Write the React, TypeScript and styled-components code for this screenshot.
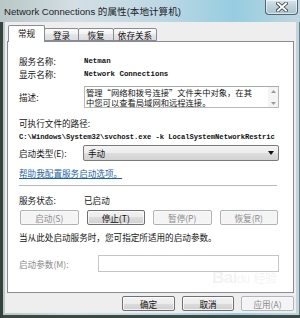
import React from "react";
import styled, { createGlobalStyle } from "styled-components";

const CJK = `"Noto Sans CJK SC", "Noto Sans", sans-serif`;
const MONO = `"Liberation Mono", "Noto Sans CJK SC", monospace`;

const GlobalStyle = createGlobalStyle`
  html, body { margin: 0; padding: 0; background: #ffffff; }
  body { width: 300px; height: 318px; overflow: hidden; }
  * { box-sizing: border-box; }
`;

const Window = styled.div`
  position: relative;
  width: 300px;
  height: 318px;
  display: flex;
  flex-direction: column;
  background: linear-gradient(90deg, #b9c7c6 0%, #d3dfe4 25%, #bcd7e4 55%, #96cde0 78%, #bfd6e0 100%);
  overflow: hidden;
`;

const TitleBar = styled.div`
  height: 22px;
  display: flex;
  align-items: flex-start;
  padding-left: 4px;
`;

const Title = styled.div`
  font-family: "Liberation Sans", ${CJK};
  font-size: 9.6px;
  line-height: 24px;
  color: #1c2428;
  white-space: nowrap;
`;

const CloseButton = styled.div`
  margin-left: auto;
  margin-right: 2px;
  width: 33px;
  height: 15px;
  border: 1px solid rgba(45, 62, 72, 0.75);
  border-top: none;
  border-radius: 0 0 4px 4px;
  background: linear-gradient(#d7e4ea, #b9cfda 55%, #a9c3cf);
  box-shadow: inset 0 0 0 1px rgba(255, 255, 255, 0.55);
  display: flex;
  align-items: center;
  justify-content: center;
`;

const Frame = styled.div`
  flex: 1;
  display: flex;
  padding: 0 4px 5px 5px;
  box-shadow: inset 3px 0 0 #33433b, inset 0 -3px 0 #3c4943, inset -1px 0 0 #6d7c80;
`;

const Client = styled.div`
  flex: 1;
  display: flex;
  flex-direction: column;
  background: #efeeee;
  padding: 3px 2px 2px 2px;
`;

const Tabs = styled.div`
  display: flex;
  align-items: flex-end;
  height: 16px;
  padding-left: 1px;
  position: relative;
  z-index: 1;
`;

const Tab = styled.div<{ $w: number; $active?: boolean }>`
  width: ${(p) => p.$w}px;
  height: ${(p) => (p.$active ? 17 : 13)}px;
  margin-bottom: ${(p) => (p.$active ? -1 : 0)}px;
  margin-left: -1px;
  border: 1px solid #898c95;
  border-bottom: ${(p) => (p.$active ? "none" : "1px solid #898c95")};
  border-radius: 2px 2px 0 0;
  background: ${(p) =>
    p.$active ? "#ffffff" : "linear-gradient(#fbfbfb, #f1f1f1 50%, #e6e6e6 50%, #dcdcdc)"};
  font-family: ${CJK};
  font-size: 8.6px;
  color: #111;
  display: flex;
  align-items: center;
  justify-content: center;
  padding-bottom: ${(p) => (p.$active ? 2 : 0)}px;
  &:first-child { margin-left: 0; }
`;

const Panel = styled.div`
  flex: 1;
  background: #ffffff;
  border: 1px solid #898c95;
  display: flex;
  flex-direction: column;
  padding: 0 13px 0 11px;
`;

const Row = styled.div<{ $top: number; $h: number }>`
  display: flex;
  align-items: center;
  margin-top: ${(p) => p.$top}px;
  height: ${(p) => p.$h}px;
  flex: none;
`;

const Label = styled.div<{ $w?: number; $disabled?: boolean }>`
  width: ${(p) => (p.$w ? `${p.$w}px` : "auto")};
  flex: none;
  font-family: ${CJK};
  font-size: 8.6px;
  line-height: 12px;
  color: ${(p) => (p.$disabled ? "#8a8a8a" : "#151515")};
  white-space: nowrap;
`;

const Value = styled.div`
  font-family: ${MONO};
  font-size: 7.4px;
  line-height: 12px;
  color: #111;
  white-space: nowrap;
  font-weight: 600;
`;

const PathText = styled(Value)`
  font-size: 7.2px;
  letter-spacing: -0.05px;
`;

const TextBox = styled.div`
  width: 195px;
  height: 22px;
  border: 1px solid #b7b9bf;
  border-top-color: #a6a9b0;
  display: flex;
  background: #fff;
`;

const TextBoxContent = styled.div`
  flex: 1;
  font-family: ${CJK};
  font-size: 8.3px;
  line-height: 10px;
  color: #151515;
  padding: 0 0 0 1px;
  white-space: nowrap;
`;

const ScrollBar = styled.div`
  width: 10px;
  display: flex;
  flex-direction: column;
  justify-content: space-between;
  align-items: center;
  padding: 3px 0 2px;
  background: #f4f4f4;
`;

const Select = styled.div`
  width: 196px;
  height: 16px;
  margin-left: -1px;
  border: 1px solid #7a7a7a;
  border-radius: 2px;
  background: linear-gradient(#f4f4f4, #ececec 50%, #dedede 50%, #d2d2d2);
  display: flex;
  align-items: center;
  padding: 0 4px 0 4px;
  font-family: ${CJK};
  font-size: 8.6px;
  color: #111;
`;

const SelectArrow = styled.div`
  margin-left: auto;
  display: flex;
  align-items: center;
`;

const Link = styled.div`
  font-family: ${CJK};
  font-size: 8.6px;
  line-height: 12px;
  color: #1b5fa8;
  text-decoration: underline;
  white-space: nowrap;
`;

const Separator = styled.div`
  margin-top: 6px;
  width: 258px;
  height: 1px;
  background: #b9b9b9;
  flex: none;
`;

const ButtonGrid = styled.div`
  display: grid;
  grid-template-columns: repeat(4, 1fr);
  column-gap: 8px;
  width: 258px;
  margin: 4px 0 0 1px;
  height: 15px;
  flex: none;
`;

const Button = styled.div<{ $disabled?: boolean; $w?: number }>`
  width: ${(p) => (p.$w ? `${p.$w}px` : "auto")};
  height: 15px;
  border: 1px solid ${(p) => (p.$disabled ? "#b0b4b7" : "#707070")};
  border-radius: 2px;
  background: ${(p) =>
    p.$disabled
      ? "#f4f4f4"
      : "linear-gradient(#f3f3f3, #ebebeb 50%, #dddddd 50%, #cfcfcf)"};
  box-shadow: inset 0 0 0 1px ${(p) => (p.$disabled ? "#f8f8f8" : "rgba(255,255,255,0.7)")};
  font-family: ${CJK};
  font-size: 8.6px;
  color: ${(p) => (p.$disabled ? "#8c8c8c" : "#111")};
  display: flex;
  align-items: center;
  justify-content: center;
  white-space: nowrap;
`;

const Input = styled.div`
  width: 181px;
  height: 17px;
  border: 1px solid #c3c5c9;
  background: #ffffff;
`;

const BottomBar = styled.div`
  display: flex;
  justify-content: flex-end;
  gap: 7px;
  padding: 3px 0 0 0;
  flex: none;
`;

const Watermark = styled.div`
  position: absolute;
  left: 212px;
  top: 268px;
  font-family: "Liberation Sans", ${CJK};
  font-size: 17px;
  font-weight: bold;
  color: rgba(200, 200, 200, 0.22);
  white-space: nowrap;
  pointer-events: none;
  letter-spacing: -0.5px;
`;

const WatermarkSmall = styled.span`
  font-size: 12px;
  font-weight: normal;
`;

export default function App() {
  return (
    <>
      <GlobalStyle />
      <Window>
        <TitleBar>
          <Title>Network Connections 的属性(本地计算机)</Title>
          <CloseButton>
            <svg width="12" height="10" viewBox="0 0 12 10">
              <path d="M2 1.5 L10 8.5 M10 1.5 L2 8.5" stroke="#2f3d44" strokeWidth="3.6" strokeLinecap="square" />
              <path d="M2 1.5 L10 8.5 M10 1.5 L2 8.5" stroke="#ffffff" strokeWidth="2" strokeLinecap="square" />
            </svg>
          </CloseButton>
        </TitleBar>
        <Frame>
          <Client>
            <Tabs>
              <Tab $w={37} $active>常规</Tab>
              <Tab $w={35}>登录</Tab>
              <Tab $w={36}>恢复</Tab>
              <Tab $w={44}>依存关系</Tab>
            </Tabs>
            <Panel>
              <Row $top={12} $h={13}>
                <Label $w={65}>服务名称:</Label>
                <Value>Netman</Value>
              </Row>
              <Row $top={0} $h={13}>
                <Label $w={65}>显示名称:</Label>
                <Value>Network Connections</Value>
              </Row>
              <Row $top={6} $h={22}>
                <Label $w={65}>描述:</Label>
                <TextBox>
                  <TextBoxContent>
                    管理“网络和拨号连接”文件夹中对象，在其
                    <br />
                    中您可以查看局域网和远程连接。
                  </TextBoxContent>
                  <ScrollBar>
                    <svg width="5" height="3" viewBox="0 0 5 3">
                      <path d="M0 3 L2.5 0 L5 3 Z" fill="#9a9a9a" />
                    </svg>
                    <svg width="5" height="3" viewBox="0 0 5 3">
                      <path d="M0 0 L2.5 3 L5 0 Z" fill="#9a9a9a" />
                    </svg>
                  </ScrollBar>
                </TextBox>
              </Row>
              <Row $top={8} $h={13}>
                <Label>可执行文件的路径:</Label>
              </Row>
              <Row $top={1} $h={13}>
                <PathText>C:\Windows\System32\svchost.exe -k LocalSystemNetworkRestric</PathText>
              </Row>
              <Row $top={2} $h={16}>
                <Label $w={65}>启动类型(E):</Label>
                <Select>
                  手动
                  <SelectArrow>
                    <svg width="6" height="4" viewBox="0 0 6 4">
                      <path d="M0 0 L6 0 L3 4 Z" fill="#111" />
                    </svg>
                  </SelectArrow>
                </Select>
              </Row>
              <Row $top={5} $h={13}>
                <Link>帮助我配置服务启动选项。</Link>
              </Row>
              <Separator />
              <Row $top={7} $h={13}>
                <Label $w={65}>服务状态:</Label>
                <Label>已启动</Label>
              </Row>
              <ButtonGrid>
                <Button $disabled>启动(S)</Button>
                <Button>停止(T)</Button>
                <Button $disabled>暂停(P)</Button>
                <Button $disabled>恢复(R)</Button>
              </ButtonGrid>
              <Row $top={5} $h={13}>
                <Label>当从此处启动服务时，您可指定所适用的启动参数。</Label>
              </Row>
              <Row $top={12} $h={17}>
                <Label $w={79} $disabled>启动参数(M):</Label>
                <Input />
              </Row>
            </Panel>
            <BottomBar>
              <Button $w={53}>确定</Button>
              <Button $w={52}>取消</Button>
              <Button $w={53} $disabled>应用(A)</Button>
            </BottomBar>
          </Client>
        </Frame>
        <Watermark>
          Bai<WatermarkSmall>du</WatermarkSmall> <WatermarkSmall>经验</WatermarkSmall>
        </Watermark>
      </Window>
    </>
  );
}
